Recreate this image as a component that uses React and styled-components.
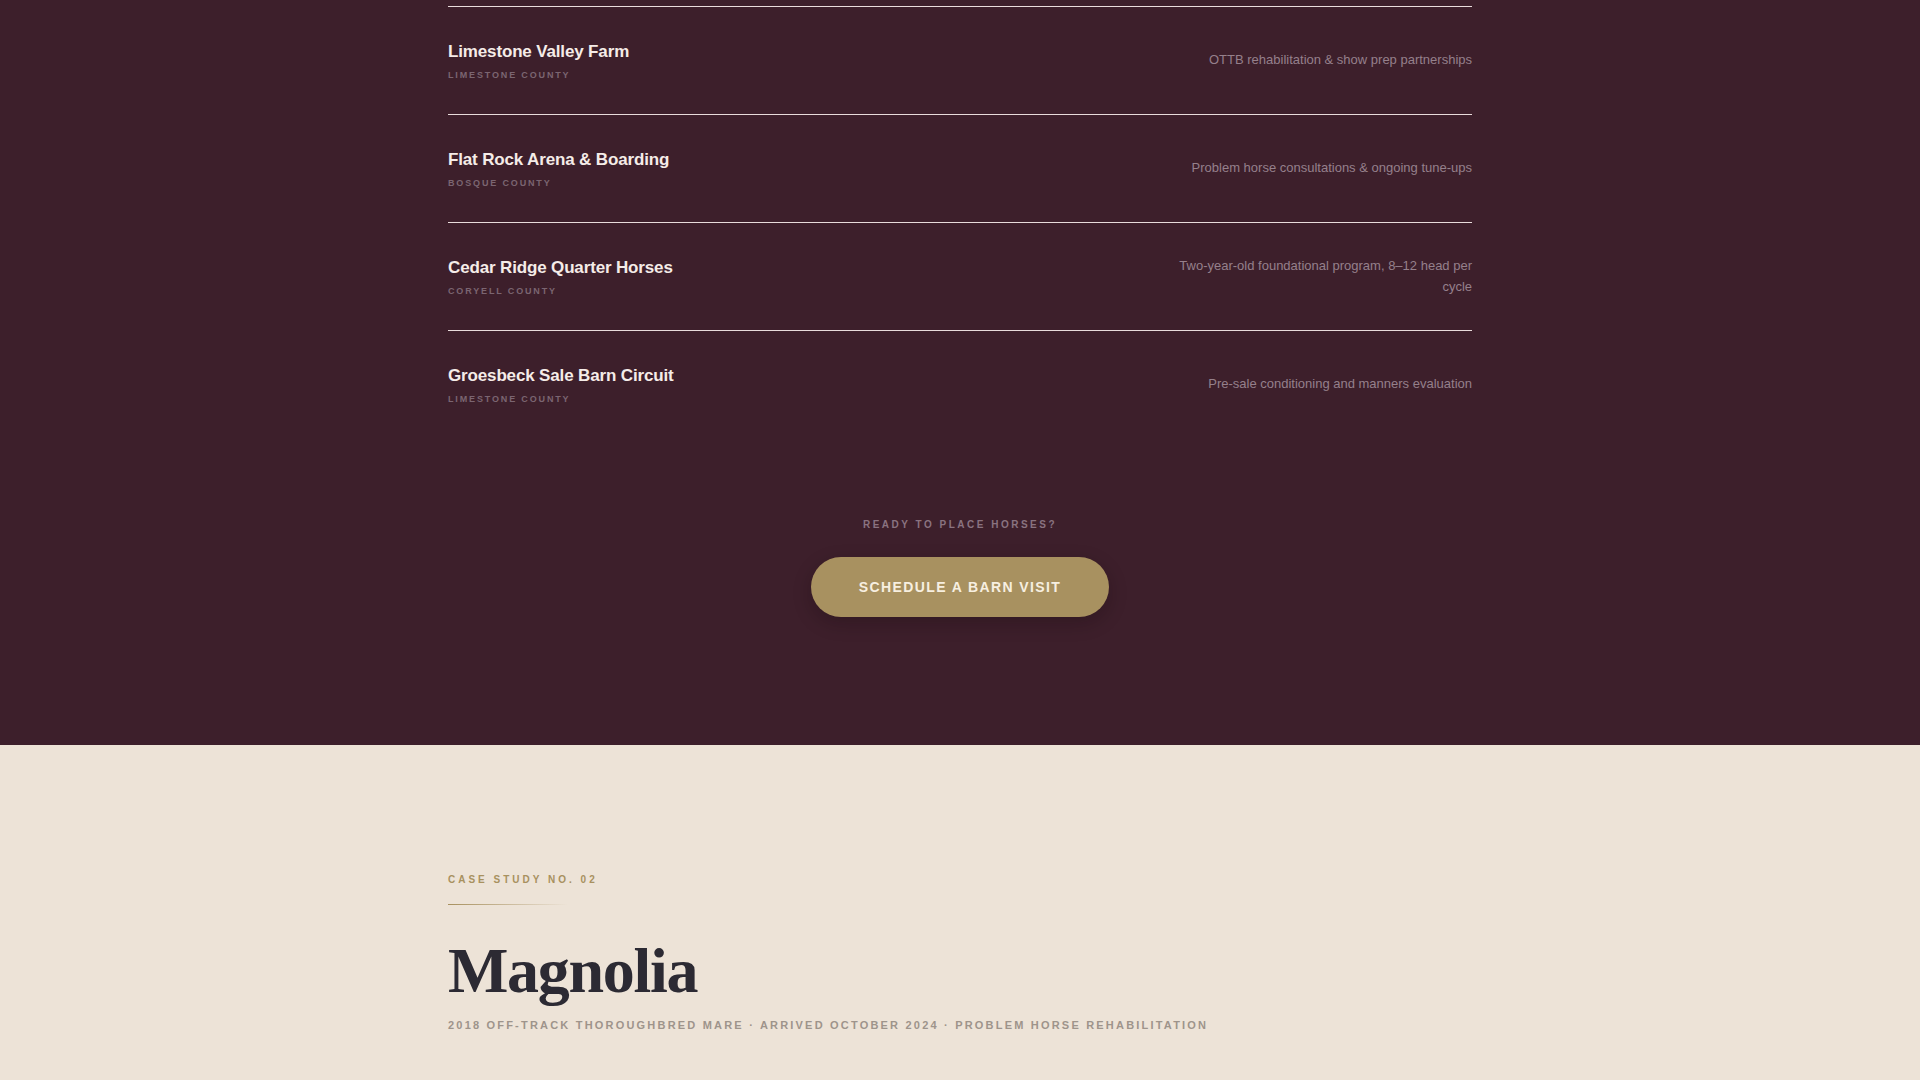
import React from "react";
import styled, { createGlobalStyle } from "styled-components";

const GlobalStyle = createGlobalStyle`
  html, body {
    margin: 0;
    padding: 0;
    background: #ede3d7;
  }
  body {
    font-family: "Liberation Sans", Arial, sans-serif;
    -webkit-font-smoothing: antialiased;
  }
`;

const partners = [
  {
    name: "Limestone Valley Farm",
    county: "Limestone County",
    note: "OTTB rehabilitation & show prep partnerships",
  },
  {
    name: "Flat Rock Arena & Boarding",
    county: "Bosque County",
    note: "Problem horse consultations & ongoing tune-ups",
  },
  {
    name: "Cedar Ridge Quarter Horses",
    county: "Coryell County",
    note: "Two-year-old foundational program, 8–12 head per cycle",
  },
  {
    name: "Groesbeck Sale Barn Circuit",
    county: "Limestone County",
    note: "Pre-sale conditioning and manners evaluation",
  },
];

const DarkSection = styled.section`
  background: #3d1f2b;
  padding: 6px 0 128px;
`;

const Inner = styled.div`
  width: 1024px;
  margin: 0 auto;
`;

const PartnerList = styled.ul`
  list-style: none;
  margin: 0;
  padding: 0;
`;

const PartnerRow = styled.li`
  display: flex;
  align-items: center;
  justify-content: space-between;
  gap: 40px;
  height: 108px;
  box-sizing: border-box;
  border-top: ${(p) => (p.$bordered ? "1.5px solid #e9dcdc" : "none")};
`;

const PartnerInfo = styled.div`
  display: flex;
  flex-direction: column;
  gap: 6px;
`;

const PartnerName = styled.h3`
  margin: 0;
  font-size: 17px;
  line-height: 23px;
  font-weight: 700;
  letter-spacing: -0.15px;
  color: #f5ece8;
`;

const County = styled.span`
  font-size: 9px;
  line-height: 12px;
  font-weight: 700;
  letter-spacing: 1.85px;
  text-transform: uppercase;
  color: #7b6571;
`;

const Note = styled.p`
  margin: -2px 0 0;
  max-width: 300px;
  text-align: right;
  font-size: 13px;
  line-height: 21px;
  color: #95808b;
`;

const Cta = styled.div`
  display: flex;
  flex-direction: column;
  align-items: center;
  padding-top: 80px;
`;

const CtaLabel = styled.p`
  margin: 0 0 26px;
  font-size: 10px;
  line-height: 13px;
  font-weight: 700;
  letter-spacing: 2.5px;
  text-transform: uppercase;
  color: #8a7380;
`;

const CtaButton = styled.a`
  display: inline-flex;
  align-items: center;
  justify-content: center;
  width: 298px;
  height: 60px;
  border-radius: 30px;
  background: #a89160;
  color: #f7efe0;
  font-size: 14px;
  font-weight: 700;
  letter-spacing: 1.4px;
  text-transform: uppercase;
  text-decoration: none;
  box-shadow: 0 6px 18px rgba(20, 6, 12, 0.25);
`;

const CaseSection = styled.section`
  background: #ede3d7;
  padding: 128px 0 60px;
`;

const Eyebrow = styled.p`
  margin: 0;
  font-size: 10px;
  line-height: 14px;
  font-weight: 700;
  letter-spacing: 3px;
  text-transform: uppercase;
  color: #a8915f;
`;

const Rule = styled.div`
  width: 120px;
  height: 1px;
  margin: 17px 0 31px;
  background: linear-gradient(90deg, #a8915f, rgba(168, 145, 95, 0));
`;

const HorseName = styled.h2`
  margin: 0;
  font-family: "Liberation Serif", "Times New Roman", serif;
  font-size: 64px;
  line-height: 70px;
  font-weight: 700;
  letter-spacing: -1.3px;
  color: #2c2a33;
`;

const HorseMeta = styled.p`
  margin: 13px 0 0;
  font-size: 11px;
  font-weight: 700;
  letter-spacing: 2.2px;
  text-transform: uppercase;
  color: #9e948b;
`;

function App() {
  return (
    <>
      <GlobalStyle />
      <DarkSection>
        <Inner>
          <PartnerList>
            {partners.map((p) => (
              <PartnerRow key={p.name} $bordered>
                <PartnerInfo>
                  <PartnerName>{p.name}</PartnerName>
                  <County>{p.county}</County>
                </PartnerInfo>
                <Note>{p.note}</Note>
              </PartnerRow>
            ))}
          </PartnerList>
          <Cta>
            <CtaLabel>Ready to place horses?</CtaLabel>
            <CtaButton href="#visit">Schedule a Barn Visit</CtaButton>
          </Cta>
        </Inner>
      </DarkSection>
      <CaseSection>
        <Inner>
          <Eyebrow>Case Study No. 02</Eyebrow>
          <Rule />
          <HorseName>Magnolia</HorseName>
          <HorseMeta>
            2018 Off-Track Thoroughbred Mare · Arrived October 2024 · Problem
            Horse Rehabilitation
          </HorseMeta>
        </Inner>
      </CaseSection>
    </>
  );
}

export default App;
